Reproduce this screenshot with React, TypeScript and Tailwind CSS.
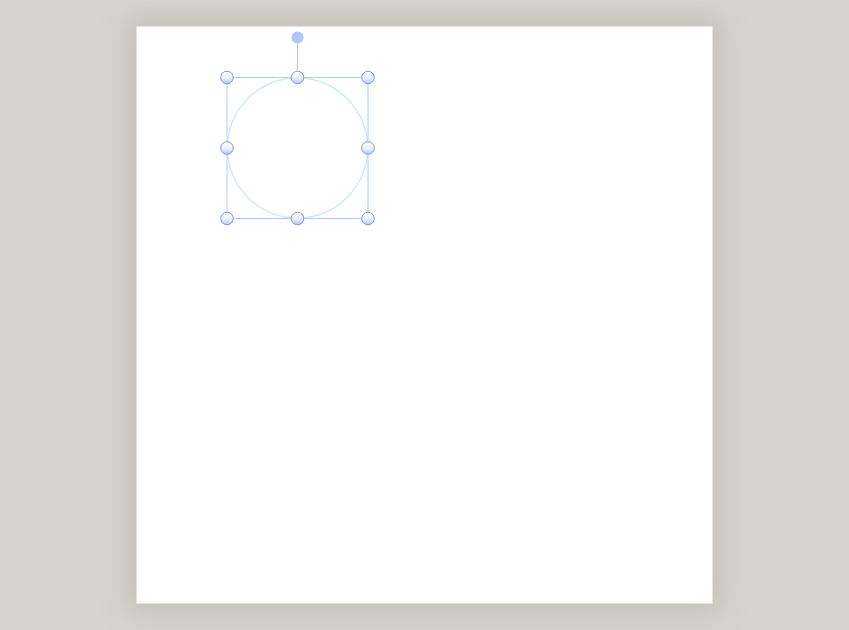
export default function App() {
  return (
    <div className="flex h-screen w-full items-center justify-center bg-[#d6d4ce]">
      <div className="relative h-[578px] w-[577px] border border-[#e4e2dd] bg-white shadow-[0_0_24px_8px_rgba(160,155,145,0.35)]">
        <svg className="absolute inset-0" width="577" height="578" viewBox="0 0 577 578">
          <defs>
            <linearGradient id="hnd" x1="0" y1="0" x2="0" y2="1">
              <stop offset="0%" stopColor="#ffffff" />
              <stop offset="55%" stopColor="#eaf0ff" />
              <stop offset="100%" stopColor="#b4c6f0" />
            </linearGradient>
          </defs>
          <circle cx="160.5" cy="121" r="70" fill="none" stroke="#c9eaf5" strokeWidth="1.3" />
          <rect x="90" y="50.5" width="141" height="141" fill="none" stroke="#b3c9fb" strokeWidth="1" />
          <line x1="160.5" y1="11" x2="160.5" y2="50.5" stroke="#b3c9fb" strokeWidth="1" />
          <circle cx="160.5" cy="10.5" r="6" fill="#adc6fd" />
          {[
            [90, 50.5],
            [160.5, 50.5],
            [231, 50.5],
            [90, 121],
            [231, 121],
            [90, 191.5],
            [160.5, 191.5],
            [231, 191.5],
          ].map(([x, y], i) => (
            <circle key={i} cx={x} cy={y} r="6.3" fill="url(#hnd)" stroke="#7b9ae0" strokeWidth="1" />
          ))}
        </svg>
      </div>
    </div>
  );
}
